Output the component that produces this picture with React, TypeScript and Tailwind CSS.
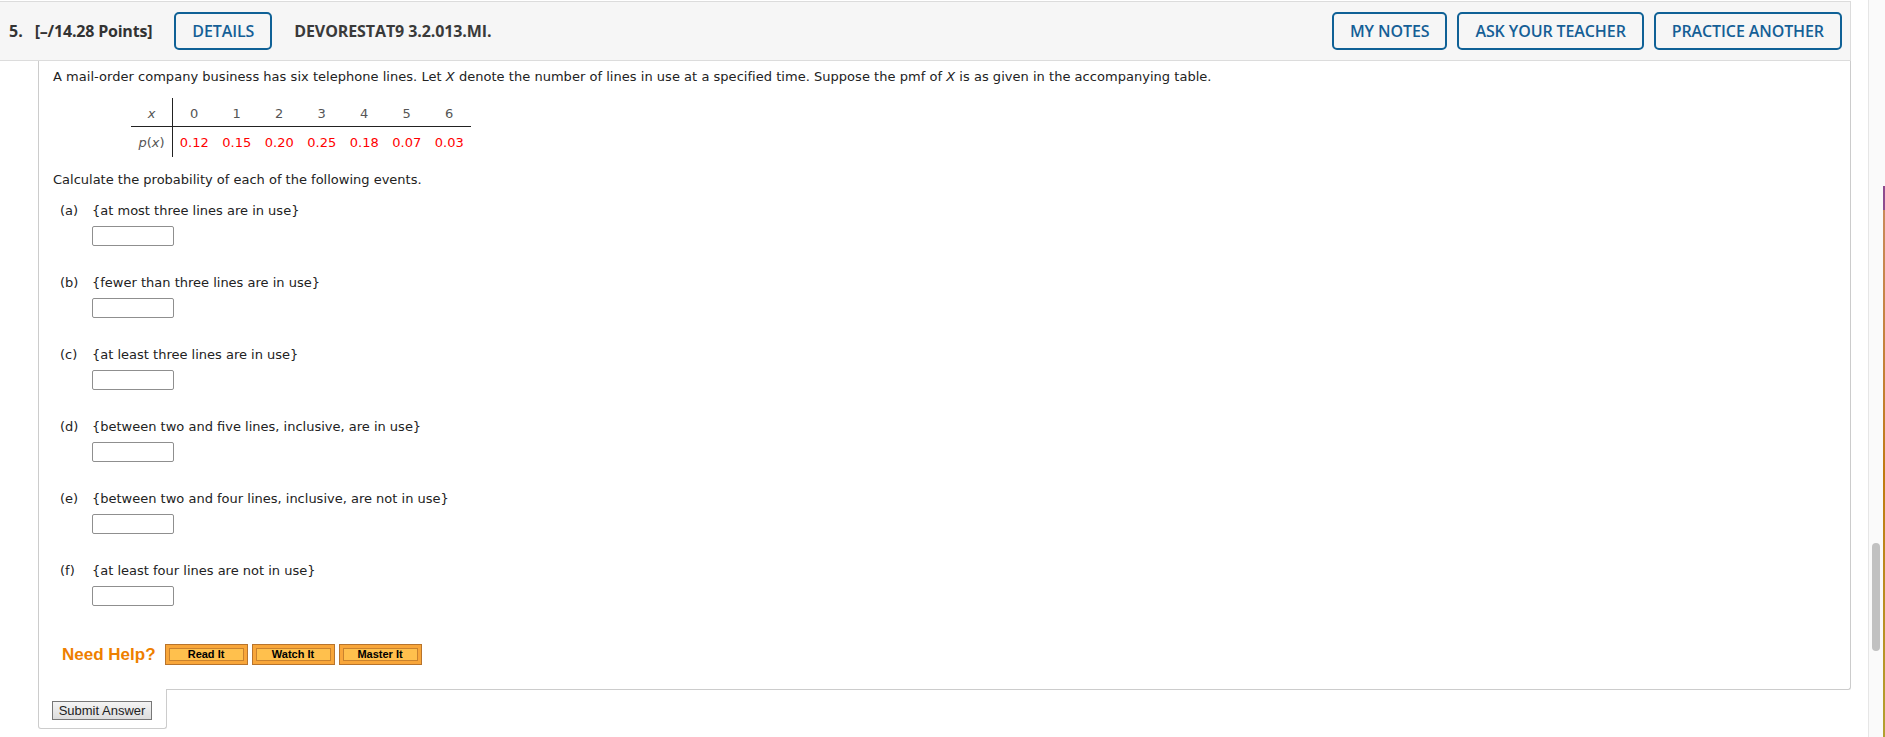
import React from "react";

const rows = [
  { l: "a", t: "{at most three lines are in use}" },
  { l: "b", t: "{fewer than three lines are in use}" },
  { l: "c", t: "{at least three lines are in use}" },
  { l: "d", t: "{between two and five lines, inclusive, are in use}" },
  { l: "e", t: "{between two and four lines, inclusive, are not in use}" },
  { l: "f", t: "{at least four lines are not in use}" },
];

const xs = ["0", "1", "2", "3", "4", "5", "6"];
const ps = ["0.12", "0.15", "0.20", "0.25", "0.18", "0.07", "0.03"];

function BlueBtn({ children }: { children: React.ReactNode }) {
  return (
    <div className="h-[38px] px-[16px] border-2 border-[#0f6196] rounded-[5px] flex items-center text-[#155f96] text-[16px] font-semibold tracking-[-0.1px]">
      {children}
    </div>
  );
}

function HelpBtn({ children }: { children: React.ReactNode }) {
  return (
    <div className="w-[83px] h-[21px] border border-[#b8742c] bg-[#f8a63a] p-[3px] flex">
      <div className="flex-1 border border-[#c9822e] bg-[#ffc04d] flex items-center justify-center text-[11px] font-bold text-black leading-none" style={{ fontFamily: "Arial, 'Liberation Sans', sans-serif" }}>
        {children}
      </div>
    </div>
  );
}

export default function App() {
  return (
    <div className="w-[1885px] h-[737px] overflow-hidden bg-white flex">
      <div className="flex-1 pr-[17px] flex flex-col">
        <div
          className="mt-[1px] h-[60px] border-t border-b border-r border-[#dcdcdc] bg-[#f6f6f6] flex items-center pl-[9px] pr-[8px] text-[#333]"
          style={{ fontFamily: "'Open Sans', sans-serif" }}
        >
          <span className="text-[16px] font-bold">5.</span>
          <span className="ml-[12px] text-[16px] font-bold tracking-[-0.2px]">[–/14.28 Points]</span>
          <div className="ml-[22px]">
            <BlueBtn>DETAILS</BlueBtn>
          </div>
          <span className="ml-[22px] text-[16px] font-bold text-[#3a3a3a] tracking-[-0.1px]">DEVORESTAT9 3.2.013.MI.</span>
          <div className="ml-auto flex gap-[10px]">
            <BlueBtn>MY NOTES</BlueBtn>
            <BlueBtn>ASK YOUR TEACHER</BlueBtn>
            <BlueBtn>PRACTICE ANOTHER</BlueBtn>
          </div>
        </div>

        <div className="ml-[38px] flex flex-col">
          <div
            className="border-l border-r border-b border-[#cccccc] rounded-br-[3px] pl-[14px] pt-[8px] pb-[24px] text-[13px] leading-[16px] text-[#222]"
            style={{ fontFamily: "'DejaVu Sans', Verdana, sans-serif" }}
          >
            <p className="tracking-[0.03px]">
              A mail-order company business has six telephone lines. Let <i>X</i> denote the number of lines in use at a specified time. Suppose the pmf of <i>X</i> is as given in the accompanying table.
            </p>

            <div className="ml-[78px] mt-[13px] flex flex-col">
              <div className="flex h-[29px] items-center pt-[3px] border-b border-[#222] w-[340px]">
                <div className="w-[41px] text-center text-[#555] italic self-stretch flex items-center justify-center">x</div>
                <div className="self-stretch w-[1px] bg-[#222] -mt-[3px]" />
                {xs.map((x) => (
                  <div key={x} className="w-[42.5px] text-center text-[#555]">{x}</div>
                ))}
              </div>
              <div className="flex h-[30px] items-center pt-[2px]">
                <div className="w-[41px] text-center text-[#555]"><i>p</i>(<i>x</i>)</div>
                <div className="self-stretch w-[1px] bg-[#222] -mt-[2px]" />
                {ps.map((p) => (
                  <div key={p} className="w-[42.5px] text-center text-[#ff0000]">{p}</div>
                ))}
              </div>
            </div>

            <p className="mt-[15px]">Calculate the probability of each of the following events.</p>

            <div className="flex flex-col gap-[29px] mt-[15px] pl-[7px]">
              {rows.map((r) => (
                <div key={r.l} className="flex flex-col">
                  <div className="flex">
                    <span className="w-[32px]">({r.l})</span>
                    <span>{r.t}</span>
                  </div>
                  <div className="ml-[32px] mt-[7px] w-[82px] h-[20px] border border-[#8f8f8f] rounded-[2px] bg-white" />
                </div>
              ))}
            </div>

            <div className="mt-[38px] flex items-center pl-[9px]" style={{ fontFamily: "Arial, 'Liberation Sans', sans-serif" }}>
              <span className="text-[17px] font-bold text-[#ee7f00] mr-[9px]">Need Help?</span>
              <div className="flex gap-[4px]">
                <HelpBtn>Read It</HelpBtn>
                <HelpBtn>Watch It</HelpBtn>
                <HelpBtn>Master It</HelpBtn>
              </div>
            </div>
          </div>

          <div className="-mt-[1px] w-[129px] border-l border-r border-b border-[#cccccc] rounded-b-[3px] bg-white pl-[13px] pt-[12px] pb-[8px]">
            <div
              className="w-[100px] h-[19px] border border-[#777] bg-gradient-to-b from-[#f4f4f4] to-[#dddddd] flex items-center justify-center text-[13px] text-[#222]"
              style={{ fontFamily: "Arial, 'Liberation Sans', sans-serif" }}
            >
              Submit Answer
            </div>
          </div>
        </div>
      </div>

      <div className="w-[17px] h-full relative border-l border-[#e6e6e6] bg-[#fafafa]">
        <div className="absolute left-[3px] top-[543px] w-[8px] h-[108px] rounded-full bg-[#c1c1c1]" />
        <div className="absolute right-0 top-[186px] w-[2px] h-[24px] bg-[#8e4b8e]" />
        <div className="absolute right-0 top-[210px] bottom-0 w-[2px] bg-gradient-to-b from-[#c98a5a] via-[#c07a10] to-[#b2a030]" />
      </div>
    </div>
  );
}
